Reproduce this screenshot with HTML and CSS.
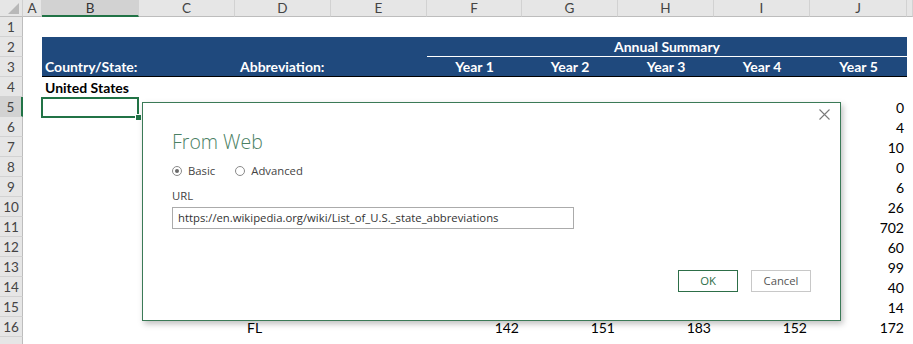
FILE: index.html
```html
<!DOCTYPE html>
<html lang="en">
<head>
    <meta charset="UTF-8">
    <title>From Web</title>
    <link rel="stylesheet" href="styles.css">
</head>
<body>
    <div class="sheet">
        <div class="row head">
            <div class="corner"><span class="tri"></span></div>
            <div class="ch">A</div>
            <div class="ch sel">B</div>
            <div class="ch">C</div>
            <div class="ch">D</div>
            <div class="ch">E</div>
            <div class="ch">F</div>
            <div class="ch">G</div>
            <div class="ch">H</div>
            <div class="ch">I</div>
            <div class="ch">J</div>
            <div class="ch"></div>
        </div>
        <div class="row"><div class="rh">1</div></div>
        <div class="row">
            <div class="rh">2</div>
            <div class="band span-be"></div>
            <div class="band span-fj summary">Annual Summary</div>
        </div>
        <div class="row">
            <div class="rh">3</div>
            <div class="band bold span-bc">Country/State:</div>
            <div class="band bold span-de">Abbreviation:</div>
            <div class="band bold center cF">Year 1</div>
            <div class="band bold center cG">Year 2</div>
            <div class="band bold center cH">Year 3</div>
            <div class="band bold center cI">Year 4</div>
            <div class="band bold center cJ">Year 5</div>
        </div>
        <div class="row">
            <div class="rh">4</div>
            <div class="cell bold cB">United States</div>
        </div>
        <div class="row">
            <div class="rh sel">5</div>
            <div class="cell active cB"></div>
            <div class="cell num cJ">0</div>
        </div>
        <div class="row"><div class="rh">6</div><div class="cell num cJ">4</div></div>
        <div class="row"><div class="rh">7</div><div class="cell num cJ">10</div></div>
        <div class="row"><div class="rh">8</div><div class="cell num cJ">0</div></div>
        <div class="row"><div class="rh">9</div><div class="cell num cJ">6</div></div>
        <div class="row"><div class="rh">10</div><div class="cell num cJ">26</div></div>
        <div class="row"><div class="rh">11</div><div class="cell num cJ">702</div></div>
        <div class="row"><div class="rh">12</div><div class="cell num cJ">60</div></div>
        <div class="row"><div class="rh">13</div><div class="cell num cJ">99</div></div>
        <div class="row"><div class="rh">14</div><div class="cell num cJ">40</div></div>
        <div class="row"><div class="rh">15</div><div class="cell num cJ">14</div></div>
        <div class="row">
            <div class="rh">16</div>
            <div class="cell abbr cD">FL</div>
            <div class="cell num cF">142</div>
            <div class="cell num cG">151</div>
            <div class="cell num cH">183</div>
            <div class="cell num cI">152</div>
            <div class="cell num cJ">172</div>
        </div>
        <div class="row"><div class="rh"></div></div>

        <div class="dialog">
            <div class="dialog-top">
                <svg class="close" width="11" height="11" viewBox="0 0 11 11">
                    <path d="M0.5 0.5 L10.5 10.5 M10.5 0.5 L0.5 10.5" stroke="#7a7a7a" stroke-width="1.1" fill="none"/>
                </svg>
            </div>
            <div class="title">From Web</div>
            <div class="radios">
                <label class="radio"><span class="dot on"></span>Basic</label>
                <label class="radio"><span class="dot"></span>Advanced</label>
            </div>
            <div class="url-label">URL</div>
            <div class="url-box">https://en.wikipedia.org/wiki/List_of_U.S._state_abbreviations</div>
            <div class="buttons">
                <div class="btn ok">OK</div>
                <div class="btn">Cancel</div>
            </div>
        </div>
    </div>
</body>
</html>
```
FILE: styles.css
```css
body {
    margin: 0;
    background: #ffffff;
    font-family: Lato, "Liberation Sans", sans-serif;
    font-size: 14px;
    color: #000;
    overflow: hidden;
}
.sheet {
    position: relative;
    width: 913px;
    height: 344px;
}
.row {
    display: grid;
    grid-template-columns: 23px 19px 97px 96px 96px 96px 95px 96px 96px 96px 97px 1fr;
    grid-template-rows: 20px;
    height: 20px;
}
.row.head {
    height: 17px;
    grid-template-rows: 17px;
}
.corner {
    position: relative;
    background: #e6e6e6;
    border-right: 1px solid #cfcfcf;
    border-bottom: 1px solid #bdbdbd;
}
.tri {
    position: absolute;
    right: 3px;
    bottom: 2px;
    width: 0;
    height: 0;
    border-left: 11px solid transparent;
    border-bottom: 11px solid #b8b8b8;
}
.ch {
    background: #e6e6e6;
    border-right: 1px solid #d2d2d2;
    border-bottom: 1px solid #bdbdbd;
    color: #444;
    font-size: 13.5px;
    line-height: 17px;
    text-align: center;
}
.ch.sel {
    background: #d2d2d2;
    border-bottom: 2px solid #217346;
    color: #333;
}
.rh {
    grid-column: 1;
    background: #e6e6e6;
    border-right: 1px solid #bdbdbd;
    border-bottom: 1px solid #d2d2d2;
    color: #444;
    font-size: 13.5px;
    line-height: 20px;
    text-align: center;
}
.rh.sel {
    background: #d2d2d2;
    border-right: 2px solid #217346;
}
.cell, .band {
    line-height: 21px;
    white-space: nowrap;
    padding: 0 3px;
}
.band {
    background: #1f497d;
    color: #fff;
}
.bold { font-weight: bold; }
.center { text-align: center; }
.num { text-align: right; }
.abbr { padding-left: 12px; }
.span-be { grid-column: 3 / 7; }
.span-fj { grid-column: 7 / 12; }
.span-bc { grid-column: 3 / 5; }
.span-de { grid-column: 5 / 7; padding-left: 5px; }
.summary {
    font-weight: bold;
    text-align: center;
    border-bottom: 1px solid #fff;
    line-height: 19px;
}
.row:nth-child(4) .band {
    border-bottom: 1px solid #000;
    line-height: 19px;
}
.cB { grid-column: 3; }
.cD { grid-column: 5; }
.cF { grid-column: 7; }
.cG { grid-column: 8; }
.cH { grid-column: 9; }
.cI { grid-column: 10; }
.cJ { grid-column: 11; }
.active {
    position: relative;
    border: 2px solid #217346;
    margin: 0 0 -1px -1px;
}
.active::after {
    content: "";
    position: absolute;
    right: -5px;
    bottom: -5px;
    width: 5px;
    height: 5px;
    background: #217346;
    border: 1px solid #fff;
}

/* dialog */
.dialog {
    position: absolute;
    left: 142px;
    top: 102px;
    width: 699px;
    height: 219px;
    box-sizing: border-box;
    background: #fff;
    border: 1px solid #3b7a57;
    box-shadow: 2px 3px 6px rgba(0, 0, 0, 0.25);
    padding: 0 29px 0 29px;
    font-family: "Open Sans", "Noto Sans", sans-serif;
    font-size: 11.3px;
    color: #444;
}
.dialog-top {
    display: flex;
    justify-content: flex-end;
    margin-right: -19px;
    padding-top: 6px;
    height: 17px;
}
.title {
    font-size: 19.5px;
    font-weight: 300;
    color: #4a8063;
    line-height: 24px;
    margin-top: 4px;
}
.radios {
    display: flex;
    gap: 20px;
    margin-top: 8px;
    line-height: 18px;
}
.radio {
    display: flex;
    align-items: center;
    gap: 6px;
}
.dot {
    width: 8px;
    height: 8px;
    border: 1px solid #8a8a8a;
    border-radius: 50%;
    display: flex;
    align-items: center;
    justify-content: center;
}
.dot.on::after {
    content: "";
    width: 4px;
    height: 4px;
    border-radius: 50%;
    background: #6a6a6a;
}
.url-label {
    margin-top: 8px;
    line-height: 16px;
}
.url-box {
    margin-top: 3px;
    width: 402px;
    height: 22px;
    box-sizing: border-box;
    border: 1px solid #ababab;
    padding: 0 5px;
    line-height: 20px;
    color: #333;
}
.buttons {
    display: flex;
    justify-content: flex-end;
    gap: 13px;
    margin-top: 41px;
}
.btn {
    width: 60px;
    height: 22px;
    box-sizing: border-box;
    border: 1px solid #c8c8c8;
    text-align: center;
    line-height: 20px;
    color: #555;
}
.btn.ok {
    border-color: #2d6e48;
    color: #2d6e48;
}
```
